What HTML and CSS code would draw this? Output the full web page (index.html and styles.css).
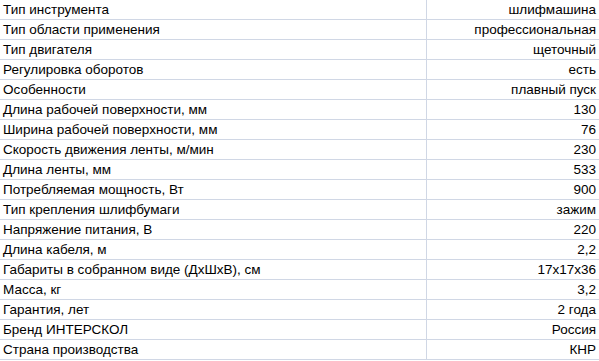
FILE: index.html
```html
<!DOCTYPE html>
<html lang="ru">
<head>
<meta charset="utf-8">
<link rel="stylesheet" href="styles.css">
</head>
<body>
<table class="sheet">
<tr><td class="k">Тип инструмента</td><td class="v">шлифмашина</td></tr>
<tr><td class="k">Тип области применения</td><td class="v">профессиональная</td></tr>
<tr><td class="k">Тип двигателя</td><td class="v">щеточный</td></tr>
<tr><td class="k">Регулировка оборотов</td><td class="v">есть</td></tr>
<tr><td class="k">Особенности</td><td class="v">плавный пуск</td></tr>
<tr><td class="k">Длина рабочей поверхности, мм</td><td class="v">130</td></tr>
<tr><td class="k">Ширина рабочей поверхности, мм</td><td class="v">76</td></tr>
<tr><td class="k">Скорость движения ленты, м/мин</td><td class="v">230</td></tr>
<tr><td class="k">Длина ленты, мм</td><td class="v">533</td></tr>
<tr><td class="k">Потребляемая мощность, Вт</td><td class="v">900</td></tr>
<tr><td class="k">Тип крепления шлифбумаги</td><td class="v">зажим</td></tr>
<tr><td class="k">Напряжение питания, В</td><td class="v">220</td></tr>
<tr><td class="k">Длина кабеля, м</td><td class="v">2,2</td></tr>
<tr><td class="k">Габариты в собранном виде (ДхШхВ), см</td><td class="v">17x17x36</td></tr>
<tr><td class="k">Масса, кг</td><td class="v">3,2</td></tr>
<tr><td class="k">Гарантия, лет</td><td class="v">2 года</td></tr>
<tr><td class="k">Бренд ИНТЕРСКОЛ</td><td class="v">Россия</td></tr>
<tr><td class="k">Страна производства</td><td class="v">КНР</td></tr>
</table>
</body>
</html>
```
FILE: styles.css
```css
html, body {
  margin: 0;
  padding: 0;
  background: #ffffff;
}
.sheet {
  border-collapse: collapse;
  width: 599px;
  table-layout: fixed;
  font-family: "Liberation Sans", Arial, sans-serif;
  font-size: 13.5px;
  color: #000000;
}
.sheet td {
  height: 19px;
  padding: 0 3px 0 3px;
  border-bottom: 1px solid #d0d7e5;
  white-space: nowrap;
  line-height: 19px;
  vertical-align: bottom;
}
.sheet .k {
  width: 420px;
  border-right: 1px solid #d0d7e5;
}
.sheet .v {
  text-align: right;
}
```
